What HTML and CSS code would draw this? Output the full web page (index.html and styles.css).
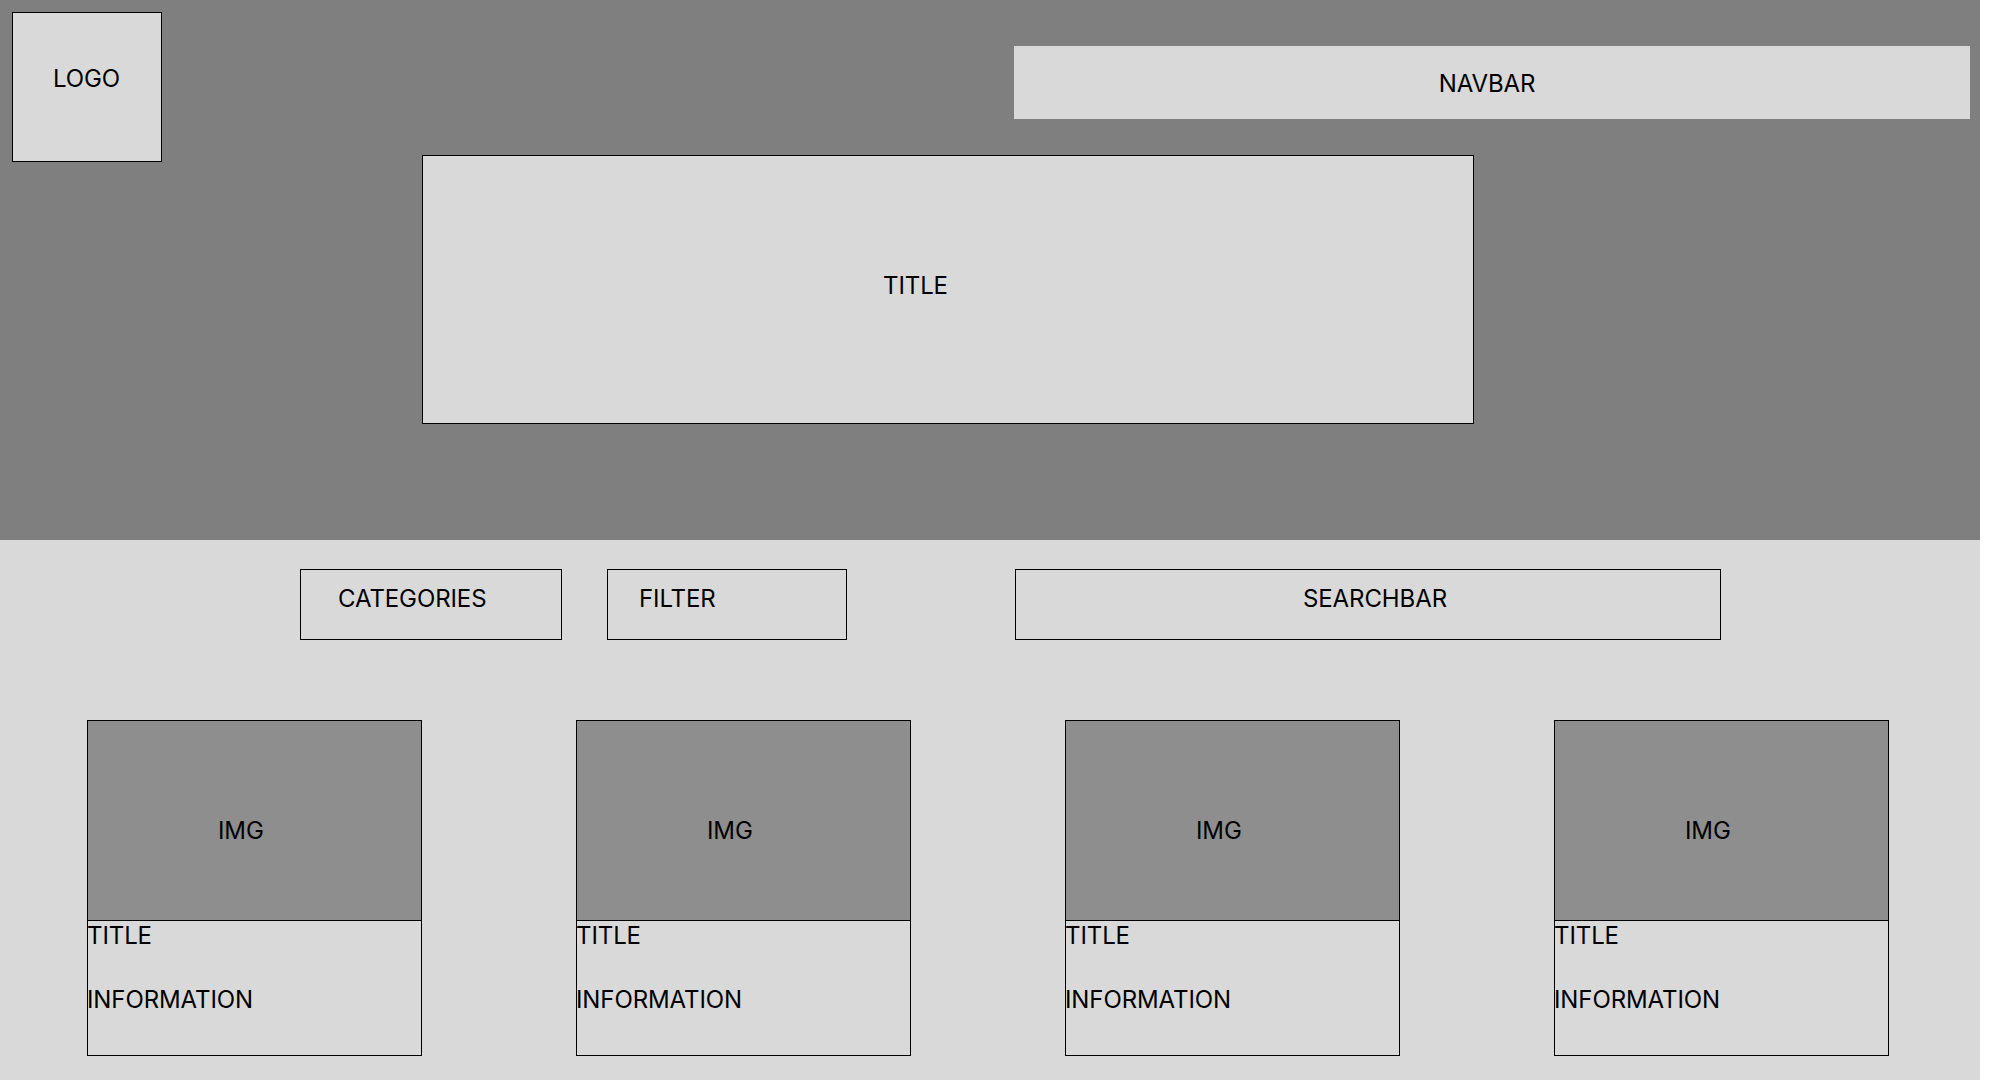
FILE: index.html
```html
<!DOCTYPE html>
<html lang="en">
<head>
  <meta charset="UTF-8" />
  <title>Wireframe Shop</title>
  <link rel="stylesheet" href="styles.css">
</head>
<body>
  <div class="page">
    <!-- Header: logo, navbar, big title -->
    <header class="header">
      <div class="logo">LOGO</div>
      <div class="header-main">
        <nav class="navbar">NAVBAR</nav>
        <div class="hero-title">TITLE</div>
      </div>
    </header>

    <!-- Content: toolbar + cards -->
    <main class="content">
      <div class="toolbar">
        <div class="tool tool-categories">CATEGORIES</div>
        <div class="tool tool-filter">FILTER</div>
        <div class="tool tool-search">SEARCHBAR</div>
      </div>

      <div class="cards">
        <div class="card">
          <div class="card-img">IMG</div>
          <div class="card-info">
            <div class="card-title">TITLE</div>
            <div class="card-text">INFORMATION</div>
          </div>
        </div>
        <div class="card">
          <div class="card-img">IMG</div>
          <div class="card-info">
            <div class="card-title">TITLE</div>
            <div class="card-text">INFORMATION</div>
          </div>
        </div>
        <div class="card">
          <div class="card-img">IMG</div>
          <div class="card-info">
            <div class="card-title">TITLE</div>
            <div class="card-text">INFORMATION</div>
          </div>
        </div>
        <div class="card">
          <div class="card-img">IMG</div>
          <div class="card-info">
            <div class="card-title">TITLE</div>
            <div class="card-text">INFORMATION</div>
          </div>
        </div>
      </div>
    </main>
  </div>
</body>
</html>
```

FILE: styles.css
```css
/*
  1. BASE
*/
html, body {
  margin: 0;
  padding: 0;
  background: #fff;
  color: #000;
  overflow: hidden;
  font-family: Inter, "Noto Sans", Arial, sans-serif;
  font-size: 24px;
  line-height: 29px;
  letter-spacing: -0.1px;
  box-sizing: border-box;
}
*, *::before, *::after {
  box-sizing: inherit;
}

.page {
  width: 1980px;
  height: 1080px;
  background: #d9d9d9;
}

/*
  2. HEADER
*/
.header {
  height: 540px;
  background: #7f7f7f;
  display: flex;
  align-items: flex-start;
  padding: 12px 10px 0 12px;
}

.logo {
  width: 150px;
  height: 150px;
  flex: none;
  background: #d9d9d9;
  border: 1px solid #000;
  padding: 51px 0 0 40px;
}

.header-main {
  flex: 1;
  margin-left: 260px;
  display: flex;
  flex-direction: column;
  align-items: flex-start;
}

.navbar {
  align-self: flex-end;
  width: 956px;
  height: 73px;
  margin-top: 34px;
  background: #d9d9d9;
  display: flex;
  align-items: center;
  justify-content: center;
  padding: 2px 10px 0 0;
}

.hero-title {
  width: 1052px;
  height: 269px;
  margin-top: 36px;
  background: #d9d9d9;
  border: 1px solid #000;
  padding: 115px 0 0 460px;
}

/*
  3. TOOLBAR
*/
.toolbar {
  display: flex;
  padding: 29px 0 0 300px;
}

.tool {
  height: 71px;
  border: 1px solid #000;
  padding-top: 14px;
}
.tool-categories {
  width: 262px;
  padding-left: 37px;
}
.tool-filter {
  width: 240px;
  margin-left: 45px;
  padding-left: 31px;
}
.tool-search {
  width: 706px;
  margin-left: 168px;
  padding-left: 287px;
}

/*
  4. CARDS
*/
.cards {
  display: flex;
  gap: 154px;
  padding: 80px 0 0 87px;
}

.card {
  width: 335px;
  height: 336px;
  border: 1px solid #000;
  display: flex;
  flex-direction: column;
}

.card-img {
  height: 200px;
  background: #8e8e8e;
  border-bottom: 1px solid #000;
  padding: 95px 0 0 130px;
}

.card-info {
  margin-left: -1px;
}

.card-text {
  margin-top: 35px;
}
```
